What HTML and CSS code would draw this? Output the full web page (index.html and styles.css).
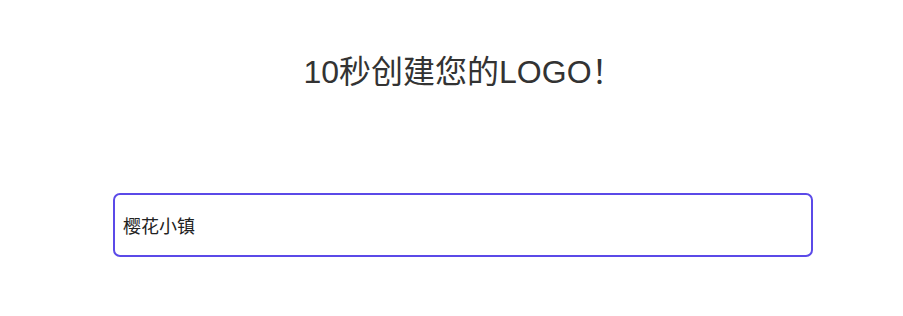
FILE: index.html
```html
<!DOCTYPE html>
<html lang="zh-CN">

<head>
    <meta charset="UTF-8">
    <meta name="viewport" content="width=device-width, initial-scale=1.0">
    <title>LOGO</title>
    <link rel="stylesheet" href="styles.css">
</head>

<body>
    <div class="page">
        <h1 class="title">10秒创建您的LOGO！</h1>
        <div class="search">
            <input type="text" class="search-input" value="樱花小镇">
        </div>
    </div>
</body>

</html>
```

FILE: styles.css
```css
body {
    margin: 0;
    padding: 0;
    background: #fff;
    font-family: "Liberation Sans", "Noto Sans CJK SC", sans-serif;
    color: #333;
}

.page {
    padding-top: 52px;
}

.title {
    text-align: center;
    font-size: 32px;
    font-weight: normal;
    line-height: 40px;
    margin: 0 0 0 24px;
    color: #333;
}

.search {
    margin-top: 101px;
    padding-left: 113px;
}

.search-input {
    box-sizing: border-box;
    width: 700px;
    height: 64px;
    border: 2px solid #5b4ae8;
    border-radius: 7px;
    padding: 0 8px;
    font-family: "Liberation Sans", "Noto Sans CJK SC", sans-serif;
    font-size: 18px;
    color: #222;
    outline: none;
}
```
